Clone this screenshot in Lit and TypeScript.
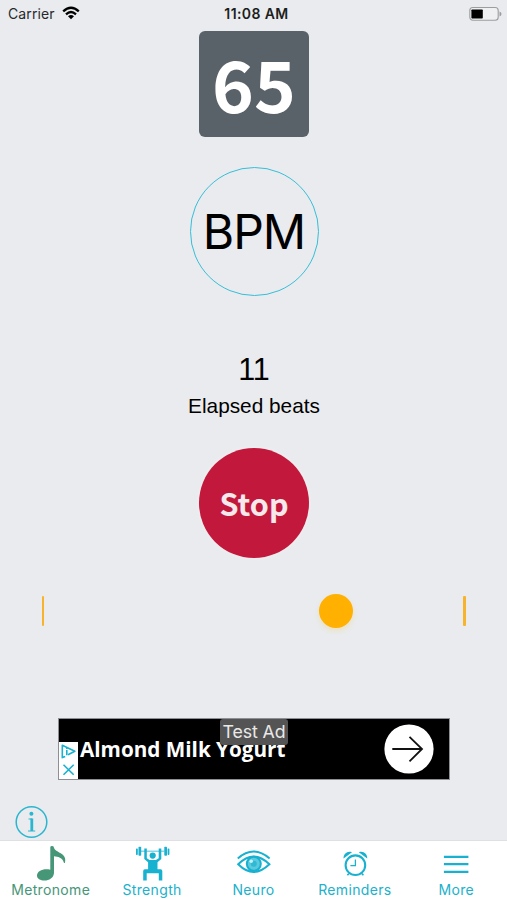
import { LitElement, html, css, svg } from "lit";
import { customElement, property, state } from "lit/decorators.js";
import { classMap } from "lit/directives/class-map.js";

const icons: Record<string, unknown> = {
  note: svg`<svg width="40" height="40" viewBox="0 0 40 40" fill="#469678">
    <path d="M19.3 6.2Q19.3 5 21 5T22.8 6.2C24 12 36.5 11.5 34 21.5Q33.6 22.6 32.8 21.4C31.5 17 27 15.5 23 15.3V31.8C22.8 37 18 39.6 13.6 39.6C9.3 39.6 6 37.8 6 34.6C6 29.8 12.8 27.2 19.3 28.8Z"/></svg>`,
  lift: svg`<svg width="40" height="40" viewBox="0 0 40 40" fill="#18b1d0">
    <rect x="4" y="7.4" width="1.8" height="6.6" rx=".7"/><rect x="6.5" y="5.8" width="2.7" height="9" rx=".8"/>
    <rect x="32.3" y="5.8" width="2.7" height="9" rx=".8"/><rect x="35.6" y="7.4" width="1.8" height="6.6" rx=".7"/>
    <rect x="9" y="9.6" width="23.4" height="1.2" opacity=".65"/>
    <circle cx="20.7" cy="14.6" r="3.1"/>
    <path d="M12.3 7.6h2.5v9.6l2.8 1.9h6.3l2.8-1.9V7.6h2.6V18l-3.8 3.2v7H28.6q1.7 0 1.7 1.7V39.5h-3.5v-7.2H14.7v7.2h-3.5V29.9q0-1.7 1.7-1.7h3.2v-7L12.3 18Z"/></svg>`,
  eye: svg`<svg width="40" height="40" viewBox="0 0 40 40" fill="none" stroke="#18b1d0">
    <path d="M4.8 17.4Q20.5 3.6 36.6 17.4" stroke-width="2"/>
    <path d="M5.2 23.2Q20.5 8 36.4 23.2Q20.5 38.5 5.2 23.2Z" stroke-width="2"/>
    <circle cx="20.8" cy="22.8" r="7" fill="#5bcade" stroke-width="2"/>
    <circle cx="20.8" cy="22.8" r="3" fill="#2fb9d4" stroke="none"/>
    <circle cx="18.2" cy="20.3" r="1.8" fill="#c9f0f5" stroke="none"/></svg>`,
  alarm: svg`<svg width="40" height="40" viewBox="0 0 40 40" fill="none" stroke="#18b1d0">
    <circle cx="20.4" cy="24.2" r="9.8" stroke-width="2.1"/>
    <path d="M20.4 18.6v6h-5" stroke-width="1.3"/>
    <path d="M13.8 32.6l-1.4 1.6M27 32.6l1.4 1.6" stroke-width="1.6"/>
    <path d="M8.6 17.6C8 13 12.7 9.5 17 11.3ZM32.2 17.6C32.8 13 28.1 9.5 23.8 11.3Z" fill="#18b1d0" stroke="none"/></svg>`,
  menu: svg`<svg width="40" height="40" viewBox="0 0 40 40" stroke="#18b1d0" stroke-width="2.3">
    <path d="M7.9 15.8h24.5M7.9 23.2h24.5M7.9 30.8h24.5"/></svg>`,
};

@customElement("status-bar")
class StatusBar extends LitElement {
  static styles = css`
    :host { display: grid; grid-template-columns: 1fr auto 1fr; align-items: center; height: 28px;
      padding: 0 5px 0 8px; box-sizing: border-box; font: 14px/28px Inter, sans-serif; color: #26292c; }
    .left { display: flex; align-items: center; gap: 7px; letter-spacing: 0.1px; }
    .time { font-weight: 600; font-size: 14px; letter-spacing: 0.4px; color: #1c1e20; padding-left: 3px; }
    .battery { justify-self: end; display: block; margin-top: -1px; }
    .wifi { display: block; margin-top: -2px; }
  `;
  render() {
    return html`
      <div class="left"><span>Carrier</span>
        <svg class="wifi" width="18" height="14" viewBox="0 0 18 14" fill="none" stroke="#000" stroke-width="2.3">
          <path d="M1.2 5.4Q9 -1.8 16.8 5.4M4 8.3Q9 3.8 14 8.3"/>
          <path d="M6 10.2Q9 7.8 12 10.2L9 13.2Z" fill="#000" stroke="none"/>
        </svg>
      </div>
      <div class="time">11:08 AM</div>
      <svg class="battery" width="33" height="16" viewBox="0 0 33 16">
        <rect x="0.8" y="1.5" width="28.4" height="12.8" rx="3" fill="#eef0f1" stroke="#9b9e9e" stroke-width="1.1"/>
        <rect x="2.4" y="3.4" width="11.4" height="9.2" rx="0.8" fill="#000"/>
        <path d="M30.5 5.6q2 .6 2 2.4t-2 2.4Z" fill="#9b9e9e"/>
      </svg>`;
  }
}

@customElement("ad-banner")
class AdBanner extends LitElement {
  static styles = css`
    :host { display: flex; align-items: center; box-sizing: border-box; position: relative; width: 392px; height: 62px;
      background: #000; border: 1px solid #8d8f92; margin-left: 58px; }
    .choices { align-self: flex-end; width: 19px; height: 37px; background: #fff; }
    .title { flex: 1; margin-left: 2px; color: #fff; font: 700 20.7px/28px "Open Sans", sans-serif; white-space: nowrap; }
    .go { display: block; margin-right: 15px; }
    .tag { position: absolute; left: 161px; top: 0; width: 68px; height: 26px; border-radius: 3px; background: #545454;
      color: #e9e9e9; font: 17.8px/26px Inter, sans-serif; text-align: center; white-space: nowrap; letter-spacing: -0.1px; }
  `;
  render() {
    return html`
      <svg class="choices" viewBox="0 0 19 37" fill="none" stroke="#18b1d0" stroke-width="1.6">
        <path d="M6.2 14.4L3.3 15.6V3.2L15.8 9.3L9 12.8" stroke-linejoin="round"/>
        <path d="M7.8 8v5.2M7.8 5.3v1.6"/>
        <path d="M4.5 22.8l10.2 10M14.7 22.8l-10.2 10"/>
      </svg>
      <div class="title">Almond Milk Yogurt</div>
      <svg class="go" width="50" height="50" viewBox="0 0 50 50">
        <circle cx="25" cy="25" r="24.6" fill="#fff"/>
        <path d="M8.3 25H37.5M25.5 12.8L38 25L25.5 37.4" fill="none" stroke="#111" stroke-width="1.8"/>
      </svg>
      <div class="tag">Test Ad</div>`;
  }
}

@customElement("tab-bar")
class TabBar extends LitElement {
  @property() active = "Metronome";
  static styles = css`
    :host { display: grid; grid-template-columns: repeat(5, 1fr); height: 60px; background: #fff;
      border-top: 1px solid #dfe0e3; box-sizing: border-box; }
    .tab { display: flex; flex-direction: column; align-items: center; color: #20b1cb;
      font: 14px/18px Inter, sans-serif; letter-spacing: 0.35px; }
    .tab svg { display: block; }
    .active { color: #469678; }
  `;
  private tabs = [
    ["Metronome", "note"], ["Strength", "lift"], ["Neuro", "eye"], ["Reminders", "alarm"], ["More", "menu"],
  ];
  render() {
    return this.tabs.map(([label, icon]) => html`
      <div class=${classMap({ tab: true, active: label === this.active })}>${icons[icon]}<span>${label}</span></div>`);
  }
}

@customElement("app-root")
class AppRoot extends LitElement {
  @state() private bpm = 65;
  @state() private beats = 11;
  static styles = css`
    :host { display: flex; flex-direction: column; width: 507px; height: 900px; background: #e9ebee; overflow: hidden; color: #000; }
    .main { flex: 1; display: flex; flex-direction: column; align-items: center; padding-top: 3px; width: 508px; box-sizing: border-box; }
    .tempo { width: 110px; height: 106px; border-radius: 6px; background: #5a6269; color: #fff; text-align: center;
      font: 700 71px/102px "Noto Sans CJK JP", sans-serif; }
    .bpm { box-sizing: border-box; width: 129px; height: 129px; margin-top: 29.5px; border-radius: 50%; border: 1.3px solid #35bfd8;
      text-align: center; font: 48px/127px Inter, sans-serif; letter-spacing: -1px; }
    .count { margin-top: 56px; font: 30.5px/34px "Liberation Sans", sans-serif; letter-spacing: 0; }
    .label { margin-top: 8px; font: 20.8px/24px "Liberation Sans", sans-serif; }
    .stop { width: 110px; height: 110px; margin-top: 30px; border: 0; padding: 0; border-radius: 50%; background: #c2183c; color: #f5e9ec;
      box-shadow: 0 0 3px 1px #f1eff1; font: 700 30.5px/110px "Noto Sans CJK JP", sans-serif; }
    .track { align-self: stretch; display: flex; align-items: center; height: 36px; margin: 35.5px 42.5px 0 41.5px; }
    .tick { width: 2.6px; height: 30px; border-radius: 1px; background: #f7b32b; }
    .space { flex: 274; }
    .rest { flex: 110; }
    .ball { width: 34px; height: 34px; border-radius: 50%; background: #ffb000; box-shadow: 0 3px 5px rgba(240, 215, 140, 0.45); }
    ad-banner { align-self: flex-start; margin-top: 89px; }
    .info { align-self: flex-start; display: block; margin: 25px 0 0 15px; }
  `;
  render() {
    return html`
      <status-bar></status-bar>
      <div class="main">
        <div class="tempo">${this.bpm}</div>
        <div class="bpm">BPM</div>
        <div class="count">${this.beats}</div>
        <div class="label">Elapsed beats</div>
        <button class="stop">Stop</button>
        <div class="track">
          <div class="tick"></div><div class="space"></div><div class="ball"></div><div class="rest"></div><div class="tick"></div>
        </div>
        <ad-banner></ad-banner>
        <svg class="info" width="33" height="34" viewBox="0 0 33 34" fill="none" stroke="#2bb6d0">
          <circle cx="16.5" cy="17" r="15.3" stroke-width="1.5"/>
          <circle cx="16.4" cy="8.8" r="2" fill="#2bb6d0" stroke="none"/>
          <path d="M16.8 13.5V26" stroke-width="2.8"/>
          <path d="M13.5 14h3.5M13 26h7.2" stroke-width="1.2"/>
        </svg>
      </div>
      <tab-bar></tab-bar>`;
  }
}
